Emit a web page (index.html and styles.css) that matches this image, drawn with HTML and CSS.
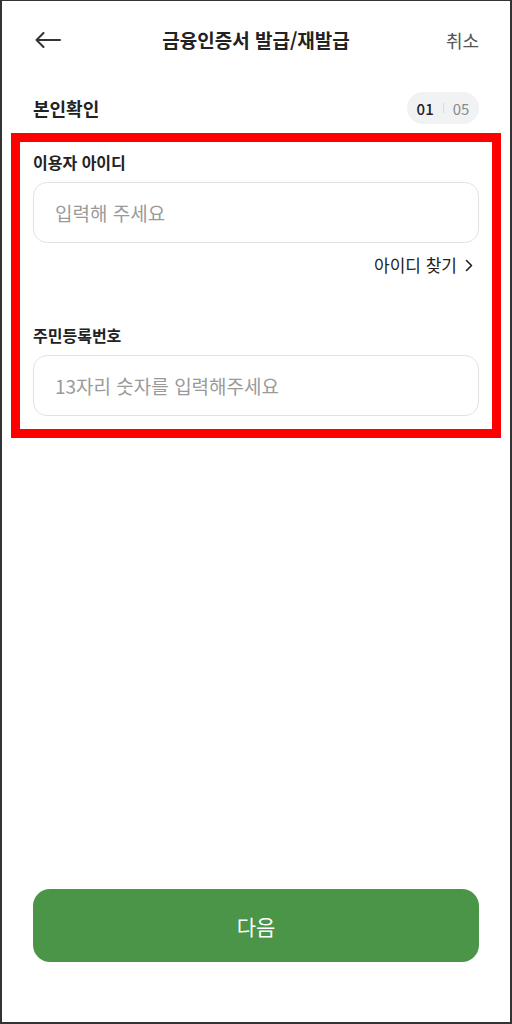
FILE: index.html
```html
<!DOCTYPE html>
<html lang="ko">
<head>
<meta charset="utf-8">
<link rel="stylesheet" href="styles.css">
</head>
<body>
<div class="screen">
  <header class="topbar">
    <div class="back">
      <svg width="26" height="16" viewBox="0 0 26 16" fill="none" stroke="#333" stroke-width="2" stroke-linecap="round" stroke-linejoin="round"><path d="M25 8H1.5M8.5 1L1.5 8l7 7"/></svg>
    </div>
    <h1 class="title">금융인증서 발급/재발급</h1>
    <div class="cancel">취소</div>
  </header>

  <div class="step-row">
    <h2 class="step-title">본인확인</h2>
    <div class="step-badge"><span class="cur">01</span><span class="sep"></span><span class="total">05</span></div>
  </div>

  <form class="form">
    <label class="label">이용자 아이디</label>
    <input class="field" type="text" placeholder="입력해 주세요">
    <div class="find-row"><span class="find">아이디 찾기</span><svg width="8" height="13" viewBox="0 0 8 13" fill="none" stroke="#222" stroke-width="1.6" stroke-linecap="round" stroke-linejoin="round"><path d="M1.5 1.5l5 5-5 5"/></svg></div>
    <label class="label label2">주민등록번호</label>
    <input class="field" type="text" placeholder="13자리 숫자를 입력해주세요">
  </form>

  <button class="next" type="button">다음</button>

  <div class="highlight"></div>
</div>
</body>
</html>
```

FILE: styles.css
```css
* { box-sizing: border-box; }
html, body { margin: 0; padding: 0; background: #fff; }
body { font-family: "Noto Sans CJK KR", "Noto Sans", sans-serif; color: #222; }

.screen {
  position: relative;
  width: 512px;
  height: 1024px;
  border: 2px solid #333;
  border-top-width: 1px;
  padding: 0 31px;
  display: flex;
  flex-direction: column;
  background: #fff;
}

.topbar {
  height: 78px;
  display: grid;
  grid-template-columns: 1fr auto 1fr;
  align-items: center;
}
.back { display: flex; align-items: center; padding-left: 2px; }
.title {
  margin: 0;
  font-size: 19px;
  font-weight: 700;
  color: #222;
  line-height: 24px;
}
.cancel {
  justify-self: end;
  font-size: 18px;
  color: #555;
  line-height: 24px;
}

.step-row {
  margin-top: 13px;
  height: 32px;
  display: flex;
  align-items: center;
  justify-content: space-between;
}
.step-title {
  margin: 0;
  font-size: 18px;
  font-weight: 700;
  color: #222;
  line-height: 24px;
}
.step-badge {
  height: 32px;
  width: 72px;
  border-radius: 16px;
  background: #f1f2f4;
  display: flex;
  align-items: center;
  justify-content: center;
  gap: 9px;
  font-size: 15px;
  line-height: 1;
}
.cur { color: #222; font-weight: 500; }
.sep { width: 1px; height: 10px; background: #dadada; }
.total { color: #8a8a8a; }

.form { display: flex; flex-direction: column; margin-top: 27px; }
.label {
  font-size: 16px;
  font-weight: 700;
  line-height: 22px;
  color: #222;
  margin-bottom: 9px;
}
.label2 { margin-top: 47px; }
.field {
  height: 61px;
  width: 100%;
  border: 1px solid #e2e2e2;
  border-radius: 14px;
  padding: 0 21px;
  font-family: inherit;
  font-size: 19px;
  color: #222;
  background: #fff;
  outline: none;
}
.field::placeholder { color: #9a9a9a; }

.find-row {
  margin-top: 10px;
  height: 24px;
  display: flex;
  align-items: center;
  justify-content: flex-end;
  gap: 8px;
  padding-right: 6px;
}
.find { font-size: 17px; color: #222; line-height: 24px; }

.next {
  margin-top: auto;
  margin-bottom: 60px;
  height: 73px;
  width: 100%;
  border: none;
  border-radius: 17px;
  background: #4a9548;
  color: #fff;
  font-family: inherit;
  font-size: 21px;
  font-weight: 400;
}

.highlight {
  position: absolute;
  left: 9px;
  top: 132px;
  width: 490px;
  height: 305px;
  border: 9px solid #ff0000;
  pointer-events: none;
}
```
